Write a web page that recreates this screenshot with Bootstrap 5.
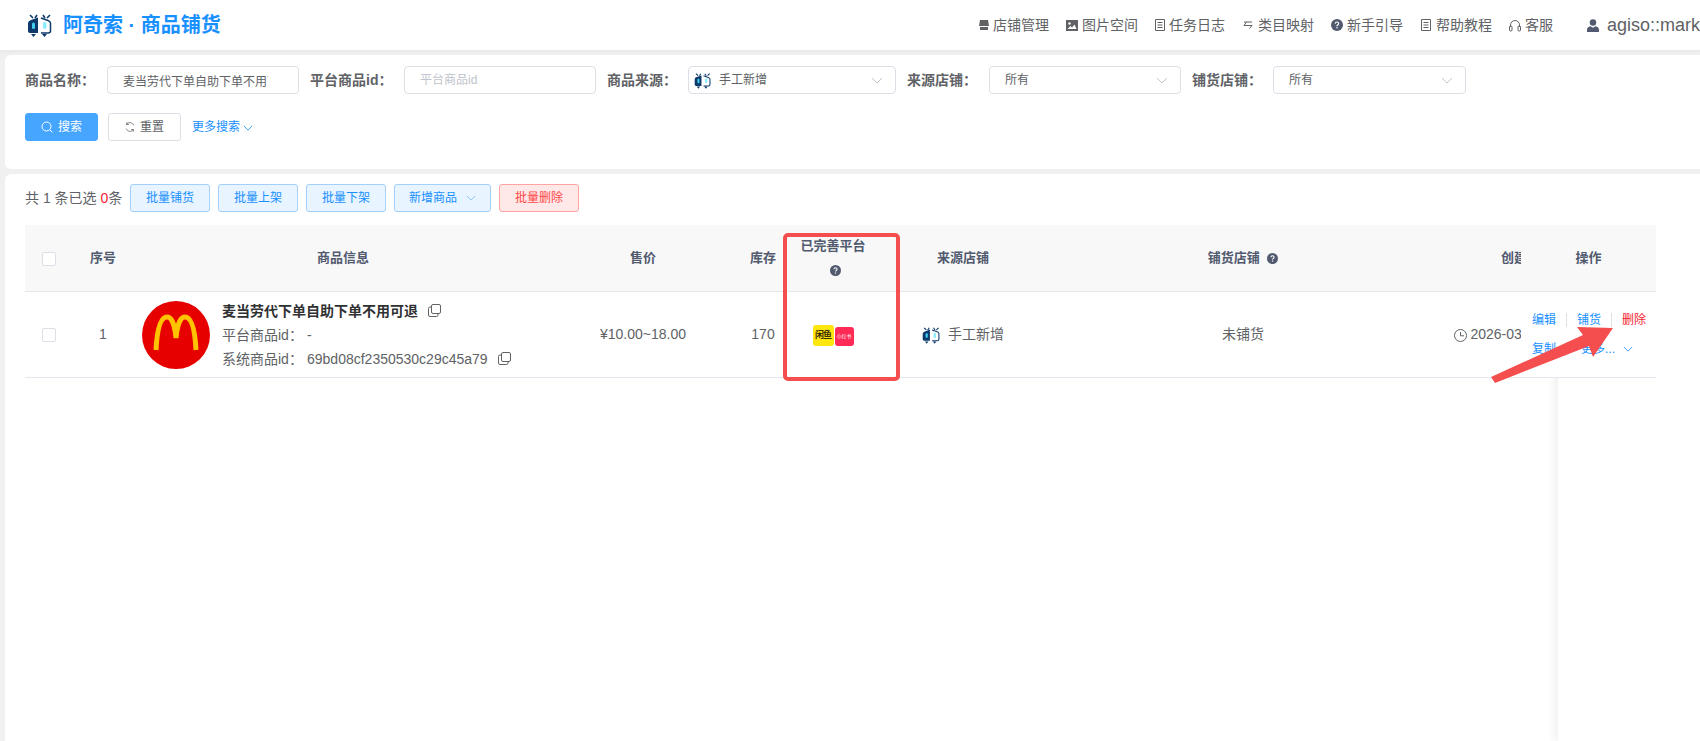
<!DOCTYPE html>
<html lang="zh-CN">
<head>
  <meta charset="UTF-8">
  <title>阿奇索 · 商品铺货</title>
  <link href="https://cdn.jsdelivr.net/npm/bootstrap@5.3.0/dist/css/bootstrap.min.css" rel="stylesheet">
  <style>
    html, body { height: 100%; }
    body {
      background: #f0f0f0;
      color: #606266;
      font-family: "Liberation Sans", "Noto Sans CJK SC", sans-serif;
      font-size: 14px;
      overflow: hidden;
    }
    .app-page { height: 741px; }
    .top-head {
      height: 50px;
      background: #fff;
      box-shadow: 0 1px 4px rgba(0, 0, 0, .05);
      padding-left: 27px;
      overflow: hidden;
    }
    .brand-text { color: #1890ff; font-size: 20px; font-weight: 700; margin-left: 11px; white-space: nowrap; }
    .head-link { color: #606266; white-space: nowrap; }
    .head-links { gap: 17px; }
    .head-user { width: 113px; margin-left: 34px; font-size: 18px; white-space: nowrap; flex: none; }
    .panel-box { background: #fff; margin-left: 5px; border-radius: 6px 0 0 6px; }
    .filter-box { height: 114px; margin-top: 5px; padding: 11px 0 0 20px; }
    .table-box { margin-top: 5px; flex: 1; min-height: 0; padding: 10px 7px 0 20px; border-radius: 6px 0 0 0; }
    .filter-row { gap: 11px; height: 28px; }
    .filter-label { font-weight: 700; white-space: nowrap; flex: none; }
    .fake-input {
      height: 28px;
      width: 192px;
      flex: none;
      border: 1px solid #dcdfe6;
      border-radius: 4px;
      font-size: 12px;
      padding: 0 30px 0 15px;
      color: #606266;
      outline: 0;
      background: #fff;
    }
    .fake-input::placeholder { color: #c0c4cc; }
    .fake-select { height: 28px; flex: none; border: 1px solid #dcdfe6; border-radius: 4px; font-size: 12px; padding: 0 12px 0 15px; }
    .fake-select.has-logo { padding-left: 5px; }
    .btn-row { margin-top: 19px; height: 28px; }
    .plain-btn {
      height: 28px;
      font-size: 12px;
      border-radius: 3px;
      padding: 0;
      display: inline-flex;
      align-items: center;
      justify-content: center;
      gap: 5px;
    }
    .btn-find { width: 73px; background: #46a6ff; border: 1px solid #46a6ff; color: #fff; }
    .btn-reset { width: 73px; background: #fff; border: 1px solid #dcdfe6; color: #606266; margin-left: 10px; }
    .more-link { color: #1890ff; font-size: 12px; margin-left: 11px; text-decoration: none; }
    .tool-row { height: 28px; gap: 8px; }
    .tool-btn { width: 80px; background: #e8f4ff; border: 1px solid #a3d0fd; color: #1890ff; }
    .tool-btn.wide-btn { width: 97px; }
    .tool-btn.red-btn { background: #ffe8e8; border-color: #ffa3a3; color: #ff4949; }
    .tool-count { white-space: nowrap; width: 97px; }
    .hot-num { color: #f5222d; }
    .grid-wrap { position: relative; margin-top: 13px; height: 516px; overflow: hidden; }
    .goods-grid { table-layout: fixed; border-collapse: separate; border-spacing: 0; width: 1731px; }
    .goods-grid th {
      height: 67px;
      padding: 0 4px;
      background: #f8f8f9;
      border-bottom: 1px solid #e3e8ee;
      text-align: center;
      font-weight: 700;
      font-size: 13px;
      color: #515a6e;
      line-height: 24px;
    }
    .goods-grid td {
      height: 86px;
      padding: 0;
      border-bottom: 1px solid #e3e8ee;
      text-align: center;
      vertical-align: middle;
      white-space: nowrap;
      overflow: hidden;
    }
    .goods-grid th:last-child, .goods-grid td:last-child { position: sticky; right: 37px; z-index: 2; }
    .goods-grid td:last-child { background: #fff; }
    .fixed-edge {
      position: absolute;
      top: 0;
      bottom: 0;
      right: 0;
      width: 135px;
      box-shadow: -4px 0 8px rgba(0, 0, 0, .06);
      pointer-events: none;
      z-index: 1;
    }
    .tick-box { width: 14px; height: 14px; border: 1px solid #dcdfe6; border-radius: 2px; background: #fff; display: inline-block; vertical-align: middle; }
    .goods-cell { display: flex; align-items: center; text-align: left; padding-left: 9px; }
    .goods-pic { width: 68px; height: 68px; flex: none; margin-right: 12px; }
    .goods-name { font-weight: 700; color: #303133; line-height: 24px; }
    .goods-meta { line-height: 24px; }
    .meta-key { display: inline-block; width: 85px; }
    .copy-ico { margin-left: 6px; vertical-align: -1px; }
    .plat-ico { display: inline-flex; align-items: center; justify-content: center; border-radius: 3px; }
    .plat-yellow { width: 21px; height: 21px; background: #ffe60f; color: #3c2f00; font-size: 9px; font-weight: 700; letter-spacing: -1px; }
    .plat-red { width: 19px; height: 19px; background: #ff2a55; color: #fff; font-size: 5px; margin-left: 1px; }
    .op-line { height: 29px; font-size: 12px; display: flex; align-items: center; padding-left: 11px; }
    .op-line a { color: #1890ff; text-decoration: none; }
    .op-line a.op-del { color: #f5222d; }
    .op-sep { width: 1px; height: 14px; background: #dcdfe6; margin: 0 10px; flex: none; }
    .mark-box {
      position: absolute;
      left: 783px;
      top: 233px;
      width: 117px;
      height: 148px;
      border: 4px solid #f44e4e;
      border-radius: 5px;
      pointer-events: none;
      z-index: 5;
    }
    .mark-arrow { position: absolute; left: 0; top: 0; pointer-events: none; z-index: 6; }
  </style>
</head>
<body>
<div class="app-page d-flex flex-column position-relative">

  <!-- 顶部 -->
  <header class="top-head d-flex align-items-center flex-none">
    <svg width="25" height="24" viewBox="0 0 25 24">
      <path d="M3 2l3 3M10 2L8 5M16 2l2 3M23 2l-3 3" stroke="#0d3a6b" stroke-width="1.6" fill="none"/>
      <path d="M11 4.500 L4 7 Q1 8 1 10 V18 Q1 20 3 20 H11 Z" fill="#0d3a6b"/>
      <path d="M14 5 L21 7.500 Q23.500 8.500 23.500 10 V18 Q23.500 20 21 20 H14" fill="#fff" stroke="#0d3a6b" stroke-width="1.500"/>
      <rect x="5" y="9.500" width="3" height="6.500" rx="1.500" fill="#3fd0ee"/>
      <rect x="16" y="9" width="3.500" height="7" rx="1.700" fill="#8beeff"/>
      <path d="M4 21h5l-2.500 3zM15 21h5l-2.500 3z" fill="#0d3a6b"/>
    </svg>
    <span class="brand-text">阿奇索 · 商品铺货</span>
    <nav class="head-links d-flex align-items-center ms-auto">
      <span class="head-link d-flex align-items-center gap-1">
        <svg width="10" height="12" viewBox="0 0 10 12"><path d="M1 1h8l1 6H0zM1 8h8v3H1z" fill="#606266"/></svg>店铺管理</span>
      <span class="head-link d-flex align-items-center gap-1">
        <svg width="12" height="11" viewBox="0 0 12 11"><path d="M0 0h12v11H0z" fill="#606266"/><circle cx="3.500" cy="3.500" r="1.200" fill="#fff"/><path d="M1.500 9l3-3 1.500 1.500L8.500 4.500 10.500 9z" fill="#fff"/></svg>图片空间</span>
      <span class="head-link d-flex align-items-center gap-1">
        <svg width="10" height="12" viewBox="0 0 10 12"><path d="M.5.500h9v11h-9zM2.500 3.500h5M2.500 6h5M2.500 8.500h5" fill="none" stroke="#606266"/></svg>任务日志</span>
      <span class="head-link d-flex align-items-center gap-1">
        <svg width="12" height="12" viewBox="0 0 12 12"><path d="M2 3h8M4.500 3L2 6.500h8M10 6.500L7.500 9.500" fill="none" stroke="#606266"/></svg>类目映射</span>
      <span class="head-link d-flex align-items-center gap-1">
        <svg width="12" height="12" viewBox="0 0 12 12"><circle cx="6" cy="6" r="6" fill="#515a6e"/><path d="M4.300 4.600Q4.400 3 6 3t1.700 1.500Q7.700 5.400 6.800 5.900 6 6.300 6 7.200" fill="none" stroke="#fff" stroke-width="1.200"/><rect x="5.400" y="8.100" width="1.200" height="1.300" fill="#fff"/></svg>新手引导</span>
      <span class="head-link d-flex align-items-center gap-1">
        <svg width="12" height="12" viewBox="0 0 12 12"><path d="M1.500.500h9v11h-9zM3.500 3.500h5M3.500 6h5M3.500 8.500h5" fill="none" stroke="#606266"/></svg>帮助教程</span>
      <span class="head-link d-flex align-items-center gap-1">
        <svg width="12" height="13" viewBox="0 0 12 13"><path d="M1.500 8V6a4.500 4.500 0 019 0v2" fill="none" stroke="#606266"/><rect x=".5" y="7" width="2.500" height="5" rx="1" fill="none" stroke="#606266"/><rect x="9" y="7" width="2.500" height="5" rx="1" fill="none" stroke="#606266"/></svg>客服</span>
    </nav>
    <div class="head-user d-flex align-items-center gap-2">
      <svg width="14" height="15" viewBox="0 0 14 15"><circle cx="7" cy="4" r="3.800" fill="#515a6e"/><path d="M0 15V12.500Q0 9.500 4 8.500L7 10 10 8.500Q14 9.500 14 12.500V15z" fill="#515a6e"/></svg>
      <span>agiso::mark</span>
    </div>
  </header>

  <!-- 搜索 -->
  <section class="panel-box filter-box flex-none">
    <div class="filter-row d-flex align-items-center">
      <div class="d-flex align-items-center">
        <span class="filter-label" style="width:82px">商品名称：</span>
        <input class="fake-input" value="麦当劳代下单自助下单不用可退">
      </div>
      <div class="d-flex align-items-center">
        <span class="filter-label" style="width:94px">平台商品id：</span>
        <input class="fake-input" placeholder="平台商品id">
      </div>
      <div class="d-flex align-items-center">
        <span class="filter-label" style="width:81px">商品来源：</span>
        <div class="fake-select has-logo d-flex align-items-center" style="width:208px">
          <svg width="17" height="17" viewBox="0 0 25 24">
            <path d="M3 2l3 3M10 2L8 5M16 2l2 3M23 2l-3 3" stroke="#0d3a6b" stroke-width="1.6" fill="none"/>
            <path d="M11 4.500 L4 7 Q1 8 1 10 V18 Q1 20 3 20 H11 Z" fill="#0d3a6b"/>
            <path d="M14 5 L21 7.500 Q23.500 8.500 23.500 10 V18 Q23.500 20 21 20 H14" fill="#fff" stroke="#0d3a6b" stroke-width="1.500"/>
            <rect x="5" y="9.500" width="3" height="6.500" rx="1.500" fill="#3fd0ee"/>
            <rect x="16" y="9" width="3.500" height="7" rx="1.700" fill="#8beeff"/>
            <path d="M4 21h5l-2.500 3zM15 21h5l-2.500 3z" fill="#0d3a6b"/>
          </svg>
          <span class="ms-2">手工新增</span>
          <svg class="ms-auto" width="12" height="7" viewBox="0 0 12 7"><path d="M1 1l5 5 5-5" fill="none" stroke="#c0c4cc"/></svg>
        </div>
      </div>
      <div class="d-flex align-items-center">
        <span class="filter-label" style="width:82px">来源店铺：</span>
        <div class="fake-select d-flex align-items-center" style="width:192px">
          <span>所有</span>
          <svg class="ms-auto" width="12" height="7" viewBox="0 0 12 7"><path d="M1 1l5 5 5-5" fill="none" stroke="#c0c4cc"/></svg>
        </div>
      </div>
      <div class="d-flex align-items-center">
        <span class="filter-label" style="width:81px">铺货店铺：</span>
        <div class="fake-select d-flex align-items-center" style="width:193px">
          <span>所有</span>
          <svg class="ms-auto" width="12" height="7" viewBox="0 0 12 7"><path d="M1 1l5 5 5-5" fill="none" stroke="#c0c4cc"/></svg>
        </div>
      </div>
    </div>
    <div class="btn-row d-flex align-items-center">
      <button class="plain-btn btn-find">
        <svg width="12" height="12" viewBox="0 0 12 12"><circle cx="5.500" cy="5.500" r="4.500" fill="none" stroke="#fff"/><path d="M9 9l2.500 2.500" stroke="#fff"/></svg>搜索</button>
      <button class="plain-btn btn-reset">
        <svg width="10" height="10" viewBox="0 0 12 12"><path d="M10.500 4A5 5 0 002 2.500M1.500 8A5 5 0 0010 9.500" fill="none" stroke="#606266"/><path d="M2 .5v2.500h2.500M10 11.500V9H7.500" fill="none" stroke="#606266"/></svg>重置</button>
      <a class="more-link" href="#">更多搜索
        <svg width="10" height="6" viewBox="0 0 12 7"><path d="M1 1l5 5 5-5" fill="none" stroke="#1890ff"/></svg></a>
    </div>
  </section>

  <!-- 列表 -->
  <section class="panel-box table-box d-flex flex-column">
    <div class="tool-row d-flex align-items-center flex-none">
      <span class="tool-count">共 1 条已选 <span class="hot-num">0</span>条</span>
      <button class="plain-btn tool-btn">批量铺货</button>
      <button class="plain-btn tool-btn">批量上架</button>
      <button class="plain-btn tool-btn">批量下架</button>
      <button class="plain-btn tool-btn wide-btn">新增商品
        <svg class="ms-1" width="10" height="6" viewBox="0 0 12 7"><path d="M1 1l5 5 5-5" fill="none" stroke="#7fbdf8"/></svg></button>
      <button class="plain-btn tool-btn red-btn">批量删除</button>
    </div>
    <div class="grid-wrap">
      <table class="goods-grid">
        <colgroup>
          <col style="width:48px"><col style="width:60px"><col style="width:420px"><col style="width:180px"><col style="width:60px">
          <col style="width:80px"><col style="width:180px"><col style="width:380px"><col style="width:188px"><col style="width:135px">
        </colgroup>
        <thead>
          <tr>
            <th><span class="tick-box"></span></th>
            <th>序号</th>
            <th>商品信息</th>
            <th>售价</th>
            <th>库存</th>
            <th>已完善平台
              <svg class="ms-1" width="11" height="11" viewBox="0 0 12 12"><circle cx="6" cy="6" r="6" fill="#515a6e"/><path d="M4.300 4.600Q4.400 3 6 3t1.700 1.500Q7.700 5.400 6.800 5.900 6 6.300 6 7.200" fill="none" stroke="#fff" stroke-width="1.200"/><rect x="5.400" y="8.100" width="1.200" height="1.300" fill="#fff"/></svg></th>
            <th>来源店铺</th>
            <th>铺货店铺
              <svg class="ms-1" width="11" height="11" viewBox="0 0 12 12"><circle cx="6" cy="6" r="6" fill="#515a6e"/><path d="M4.300 4.600Q4.400 3 6 3t1.700 1.500Q7.700 5.400 6.800 5.900 6 6.300 6 7.200" fill="none" stroke="#fff" stroke-width="1.200"/><rect x="5.400" y="8.100" width="1.200" height="1.300" fill="#fff"/></svg></th>
            <th>创建时间</th>
            <th>操作</th>
          </tr>
        </thead>
        <tbody>
          <tr>
            <td><span class="tick-box"></span></td>
            <td>1</td>
            <td>
              <div class="goods-cell">
                <svg class="goods-pic" viewBox="0 0 68 68">
                  <circle cx="34" cy="34" r="34" fill="#e60000"/>
                  <path d="M14 49C15 30 18 16 25 16 30 16 33 25 34 37 35 25 38 16 43 16 50 16 53 30 54 49" fill="none" stroke="#ffc300" stroke-width="5"/>
                </svg>
                <div>
                  <div class="goods-name">麦当劳代下单自助下单不用可退
                    <svg class="copy-ico" width="13" height="13" viewBox="0 0 13 13"><rect x="3.500" y=".5" width="9" height="9" rx="1.500" fill="none" stroke="#606266"/><path d="M3.500 3H2Q.5 3 .5 4.500V11Q.5 12.500 2 12.500H8.500Q10 12.500 10 11V9.500" fill="none" stroke="#606266"/></svg></div>
                  <div class="goods-meta"><span class="meta-key">平台商品id：</span>-</div>
                  <div class="goods-meta"><span class="meta-key">系统商品id：</span>69bd08cf2350530c29c45a79
                    <svg class="copy-ico" width="13" height="13" viewBox="0 0 13 13"><rect x="3.500" y=".5" width="9" height="9" rx="1.500" fill="none" stroke="#606266"/><path d="M3.500 3H2Q.5 3 .5 4.500V11Q.5 12.500 2 12.500H8.500Q10 12.500 10 11V9.500" fill="none" stroke="#606266"/></svg></div>
                </div>
              </div>
            </td>
            <td>¥10.00~18.00</td>
            <td>170</td>
            <td>
              <span class="plat-ico plat-yellow">闲鱼</span><span class="plat-ico plat-red">小红书</span>
            </td>
            <td>
              <div class="d-flex align-items-center" style="padding-left:49px">
                <svg width="18" height="18" viewBox="0 0 25 24">
                  <path d="M3 2l3 3M10 2L8 5M16 2l2 3M23 2l-3 3" stroke="#0d3a6b" stroke-width="1.6" fill="none"/>
                  <path d="M11 4.500 L4 7 Q1 8 1 10 V18 Q1 20 3 20 H11 Z" fill="#0d3a6b"/>
                  <path d="M14 5 L21 7.500 Q23.500 8.500 23.500 10 V18 Q23.500 20 21 20 H14" fill="#fff" stroke="#0d3a6b" stroke-width="1.500"/>
                  <rect x="5" y="9.500" width="3" height="6.500" rx="1.500" fill="#3fd0ee"/>
                  <rect x="16" y="9" width="3.500" height="7" rx="1.700" fill="#8beeff"/>
                  <path d="M4 21h5l-2.500 3zM15 21h5l-2.500 3z" fill="#0d3a6b"/>
                </svg>
                <span class="ms-2">手工新增</span>
              </div>
            </td>
            <td>未铺货</td>
            <td>
              <svg width="13" height="13" viewBox="0 0 13 13"><circle cx="6.500" cy="6.500" r="6" fill="none" stroke="#606266"/><path d="M6.500 3v3.800H10" fill="none" stroke="#606266"/></svg>
              2026-03-20 16:00:00</td>
            <td>
              <div class="op-line"><a href="#">编辑</a><i class="op-sep"></i><a href="#">铺货</a><i class="op-sep"></i><a class="op-del" href="#">删除</a></div>
              <div class="op-line"><a href="#">复制</a><i class="op-sep"></i><a class="ms-1" href="#">更多...</a>
                <svg class="ms-2" width="10" height="6" viewBox="0 0 12 7"><path d="M1 1l5 5 5-5" fill="none" stroke="#1890ff"/></svg></div>
            </td>
          </tr>
        </tbody>
      </table>
      <div class="fixed-edge"></div>
    </div>
  </section>

  <!-- 截图上的标注 -->
  <div class="mark-box"></div>
  <svg class="mark-arrow" width="1700" height="741"><polygon points="1491,377 1583,335 1577,327 1613,328 1593,357 1589,346 1495,383" fill="#f44e4e"/></svg>
</div>
<script src="https://cdn.jsdelivr.net/npm/bootstrap@5.3.0/dist/js/bootstrap.bundle.min.js"></script>
</body>
</html>
